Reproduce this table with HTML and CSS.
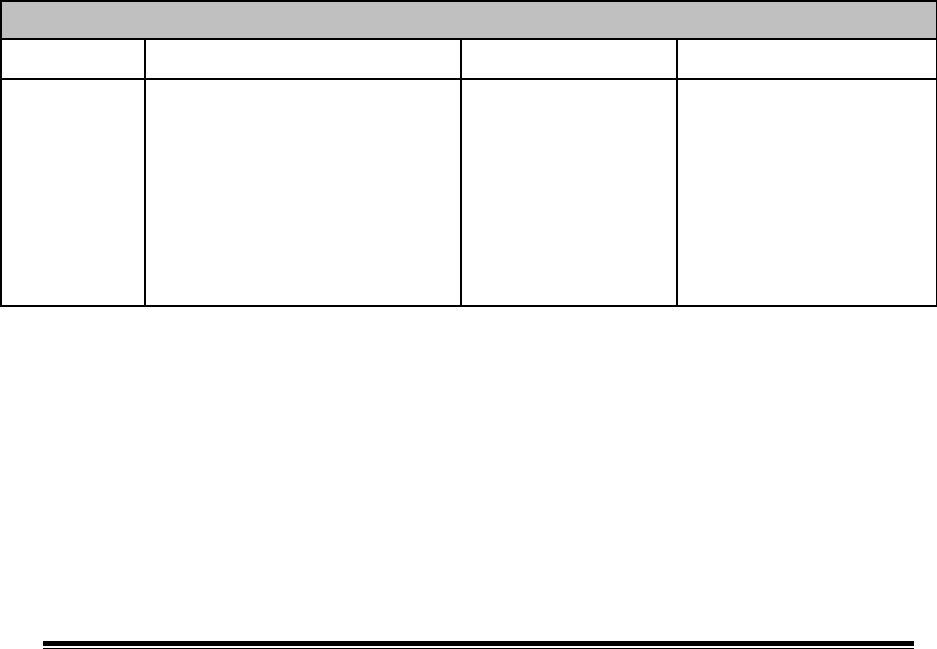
FILE: index.html
```html
<!DOCTYPE html>
<html lang="en">
<head>
  <meta charset="UTF-8" />
  <meta name="viewport" content="width=device-width, initial-scale=1.0"/>
  <title>Form</title>
  <link rel="stylesheet" href="styles.css">
</head>
<body>
  <table class="form-table">
    <colgroup>
      <col class="col-a">
      <col class="col-b">
      <col class="col-c">
      <col class="col-d">
    </colgroup>
    <tr class="head-row">
      <th colspan="4"></th>
    </tr>
    <tr class="label-row">
      <td></td>
      <td></td>
      <td></td>
      <td></td>
    </tr>
    <tr class="entry-row">
      <td></td>
      <td></td>
      <td></td>
      <td></td>
    </tr>
  </table>

  <div class="page-rule"></div>
</body>
</html>
```

FILE: styles.css
```css
body {
  margin: 0;
  font-family: 'Liberation Sans', Arial, sans-serif;
  background: white;
}

.form-table {
  width: 936px;
  border-collapse: collapse;
  table-layout: fixed;
}

.form-table th,
.form-table td {
  border: 2px solid black;
  padding: 0;
}

.col-a { width: 144px; }
.col-b { width: 316px; }
.col-c { width: 216px; }
.col-d { width: 260px; }

.head-row th {
  background-color: #c0c0c0;
  height: 36px;
}

.label-row td {
  height: 38px;
}

.entry-row td {
  height: 225px;
}

.page-rule {
  margin: 334px 0 0 43px;
  width: 871px;
  height: 2px;
  border-top: 5px solid black;
  border-bottom: 2px solid black;
}
```
